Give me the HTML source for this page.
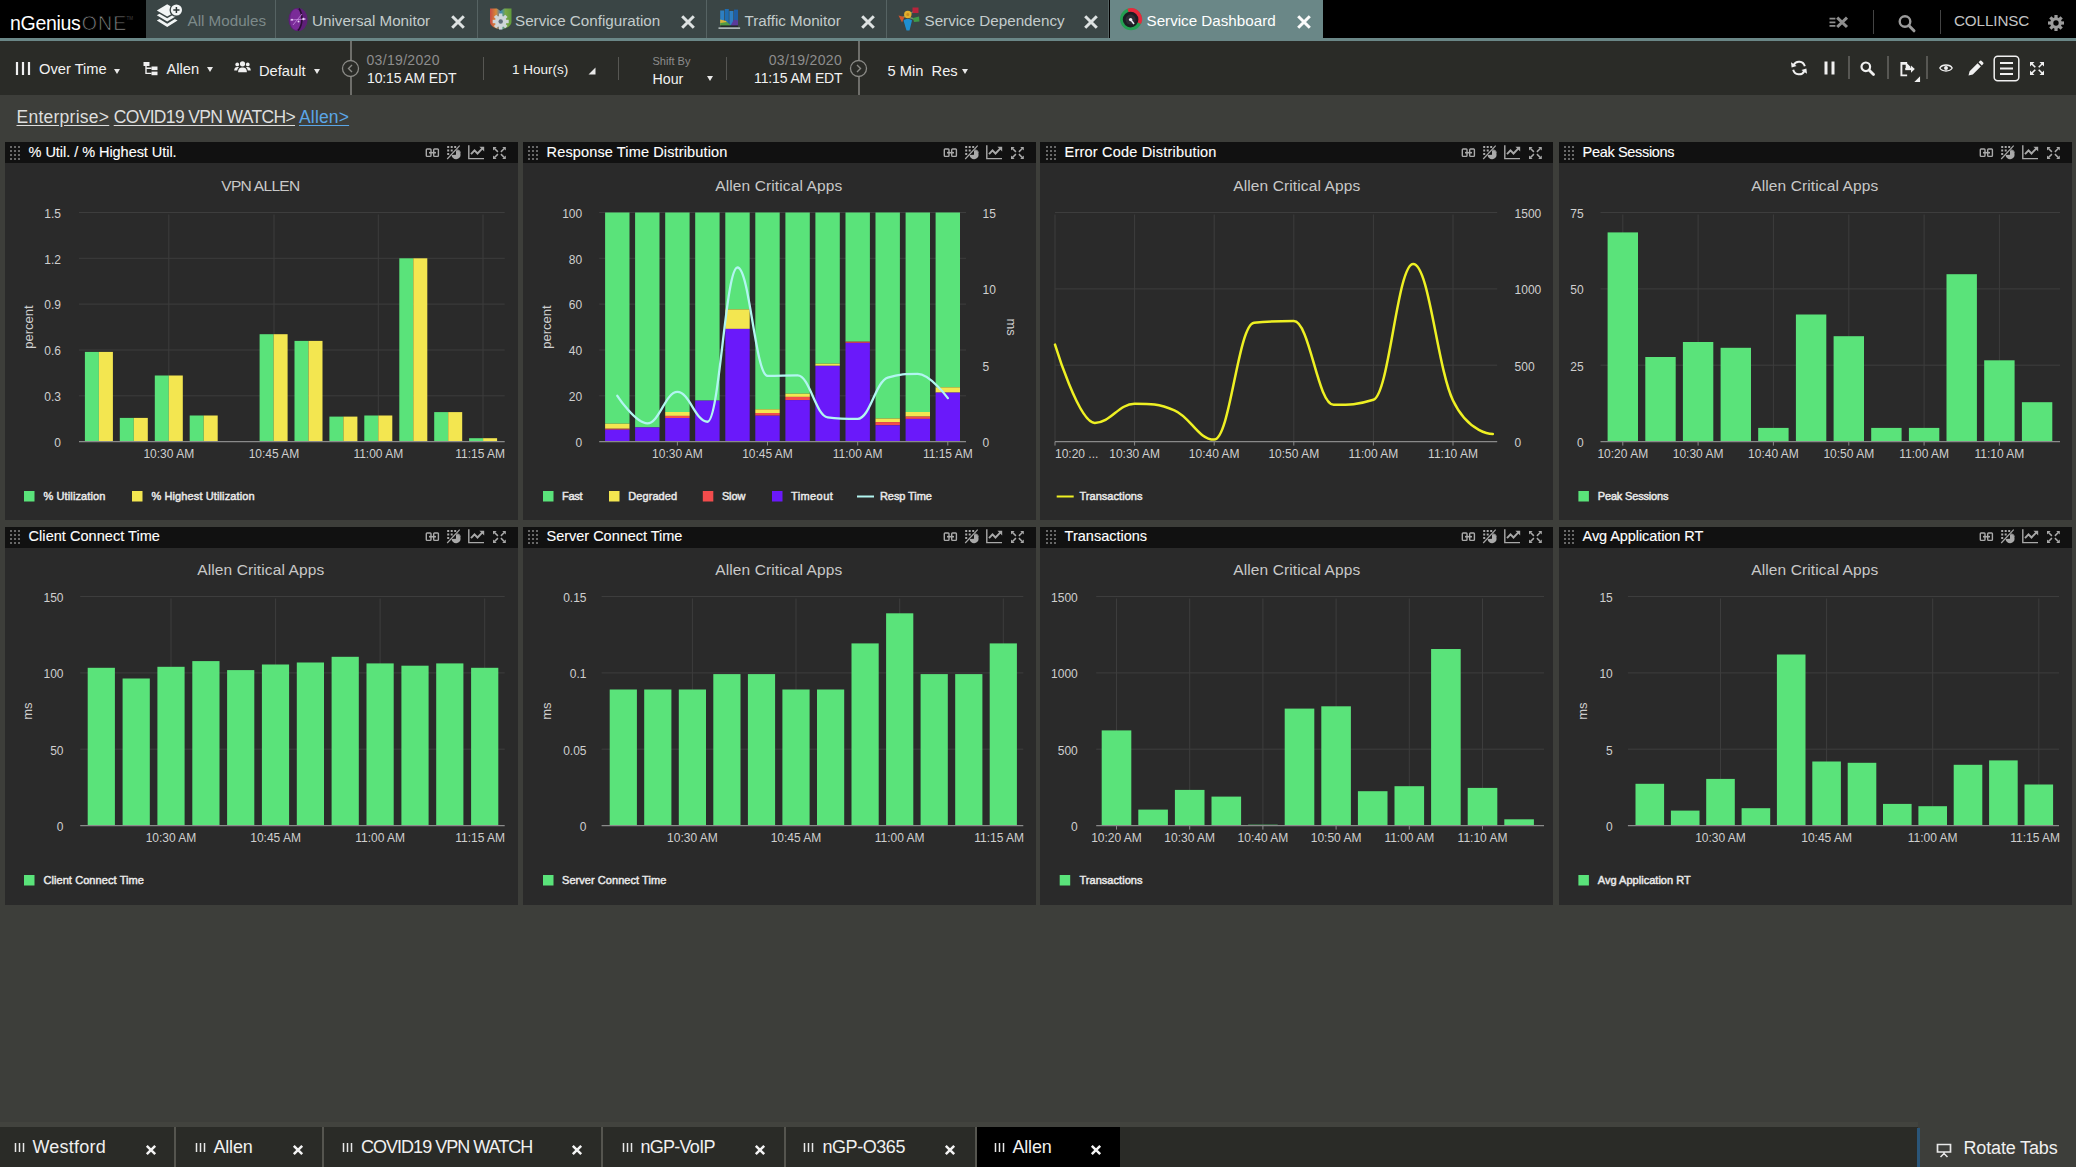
<!DOCTYPE html>
<html lang="en"><head><meta charset="utf-8"><title>nGeniusONE - Service Dashboard</title>
<style>
html,body{margin:0;padding:0}
body{width:2076px;height:1167px;overflow:hidden;position:relative;background:#3d3e3a;font-family:"Liberation Sans",sans-serif;color:#fff}
*{box-sizing:border-box}
#topbar{position:absolute;left:0;top:0;width:2076px;height:38px;background:#000}
#tabline{position:absolute;left:0;top:37.5px;width:2076px;height:3.5px;background:#6a8787}
#logo{position:absolute;left:0;top:0;width:146px;height:38px;background:#000;font-size:19.5px;line-height:47px;padding-left:10px;letter-spacing:-.3px;overflow:hidden;white-space:nowrap}
#logo .one{color:#8a8a8a;font-weight:normal;letter-spacing:1.2px;-webkit-text-stroke:.75px #000;margin-left:1.2px}
#logo sup{font-size:4.5px;color:#444;letter-spacing:0;margin-left:-1px;position:relative;top:-3px;vertical-align:super;line-height:0}
.tab{position:absolute;top:0;height:38px;background:#3a4545;border-right:1px solid #566363;font-size:15.2px;line-height:42px;color:#c3cccc;white-space:nowrap}
.tab .lbl{position:absolute;top:0}
.tab.mod .lbl{color:#7d8a8a}
.tab.act{background:#6a8787;color:#fff;border-right:none;height:41px}
.tab svg{position:absolute}
.tab .x{position:absolute;top:13.7px;width:16px;height:16px}
.tr{position:absolute;top:0;height:38px}
#user{position:absolute;left:1954px;top:0;line-height:41.5px;font-size:15.2px;color:#c4c4c4;letter-spacing:-.1px}
.vs{position:absolute;width:1.2px;background:#444}
#toolbar{position:absolute;left:0;top:41px;width:2076px;height:54px;background:#2a2b27}
#toolbar .t{position:absolute;white-space:nowrap;font-size:14.7px;color:#f2f2f2;line-height:18px}
#toolbar .g{color:#8d8d8d;font-size:14px;letter-spacing:.32px}
#toolbar .s{color:#8d8d8d;font-size:11px}
#toolbar svg{position:absolute}
#toolbar .vl{position:absolute;top:0;width:2px;height:54px;background:#6e6e6a}
#toolbar .sep{position:absolute;top:16px;width:1.4px;height:23px;background:#575753}
.car{position:absolute;width:0;height:0;border-left:3px solid transparent;border-right:3px solid transparent;border-top:5px solid #e8e8e8}
#crumbs{position:absolute;left:16px;top:105px;font-size:17.5px;line-height:24px;white-space:nowrap;color:#dedede}
#crumbs a{position:absolute;top:0;color:#dedede;text-decoration:underline;text-underline-offset:2px}
#crumbs a.cur{color:#5ba6e6}
.panel{position:absolute;width:512px;height:378.6px;background:#2a2a2a;overflow:hidden}
.pin{position:absolute;top:0;width:512px;height:379px}
.phc{position:absolute;left:0;top:0;width:512px;height:21.4px}
.ph{position:absolute;left:0;top:0;width:512px;height:21.2px;background:#111}
.phc .grip{position:absolute;left:4px;top:3px}
.phc .pt{position:absolute;left:23.6px;top:0;line-height:20.5px;font-size:14.5px;color:#fff;white-space:nowrap;-webkit-text-stroke:.12px #fff}
.phc .hi{position:absolute;left:419px;top:0}
.ch{position:absolute;left:0;top:0;font-family:"Liberation Sans",sans-serif}
#bbar{position:absolute;left:0;top:1126.6px;width:1917.5px;height:41px;background:#2a2b27;box-shadow:0 -5px 0 #42433e}
#bbar .bt{position:absolute;top:.4px;height:40px;font-size:18px;line-height:40px;color:#f0f0f0;white-space:nowrap}
#bbar .bs{position:absolute;top:.4px;width:2px;height:40px;background:#55554f}
#bbar .act{position:absolute;top:.4px;height:40px;background:#000}
#bbar svg{position:absolute}
#rot{position:absolute;left:1917.3px;top:1127.5px;width:2.8px;height:40px;background:#2a5578}
#rott{position:absolute;left:1963.5px;top:1128.4px;font-size:18px;letter-spacing:-.16px;line-height:40px;color:#f0f0f0;white-space:nowrap}

</style></head>
<body>
<div id="topbar"></div>
<div id="logo">nGenius<span class="one">ONE</span><sup>TM</sup></div>
<nav id="tabs">
<div class="tab mod" style="left:146px;width:130px"><svg style="left:0;top:0" width="42" height="38" viewBox="0 0 42 38"><g fill="#f2f5f5"><path d="M10.8 10.4 L21.2 4.3 L31.6 10.4 L21.2 16.5 Z"/><path d="M10.8 15.2 L13.5 13.7 L21.2 18.3 L28.9 13.7 L31.6 15.2 L21.2 21.5 Z"/><path d="M10.8 20.6 L13.5 19.1 L21.2 23.7 L28.9 19.1 L31.6 20.6 L21.2 26.9 Z"/></g><circle cx="30.4" cy="10" r="6.9" fill="#3a4545"/><circle cx="30.4" cy="10" r="5.6" fill="#f2f5f5"/><path d="M30.4 6.9 V13.1 M27.3 10 H33.5" stroke="#2c3535" stroke-width="1.5"/></svg><span class="lbl" style="left:41.5px">All Modules</span></div>
<div class="tab" style="left:276px;width:201.5px"><svg style="left:11px;top:7px" width="22" height="25" viewBox="0 0 22 25"><ellipse cx="11" cy="12.5" rx="9.6" ry="11.6" fill="#5e1f78"/><ellipse cx="9" cy="12.5" rx="6" ry="10.6" fill="#7a2b98"/><path d="M12 1.5 C16 7 16 18 11 23.5" stroke="#2a0d36" stroke-width="1.6" fill="none"/><path d="M3 13 L19 12 M6 18 L15 7" stroke="#c58ade" stroke-width=".8" fill="none"/><circle cx="5" cy="12.8" r="1" fill="#e8cff5"/><circle cx="16.5" cy="12" r="1.2" fill="#e8cff5"/><circle cx="11.5" cy="14.5" r="1" fill="#e8cff5"/></svg><span class="lbl" style="left:36px">Universal Monitor</span><svg class="x" style="left:173.5px" viewBox="0 0 16 16"><path d="M2.2 2.2 L13.8 13.8 M13.8 2.2 L2.2 13.8" stroke="#dde2e2" stroke-width="3"/></svg></div>
<div class="tab" style="left:477.5px;width:229.5px"><svg style="left:11px;top:7px" width="24" height="24" viewBox="0 0 24 24"><defs><linearGradient id="scg" x1="0" x2="1" y1="0" y2="0"><stop offset="0" stop-color="#c84a44"/><stop offset=".28" stop-color="#d88a3a"/><stop offset=".5" stop-color="#3b86b8"/><stop offset=".72" stop-color="#7aa848"/><stop offset="1" stop-color="#5f9a3c"/></linearGradient></defs><path d="M1 1.5 H8 L11.5 4 L15 1.5 H22.5 V15 C22.5 19 17 21.5 11.7 22.5 C6 21.5 1 19 1 15 Z" fill="url(#scg)"/><g transform="translate(11.7 14.5)"><g fill="#cfd6da"><rect x="-1.7" y="-8" width="3.4" height="16"/><rect x="-1.7" y="-8" width="3.4" height="16" transform="rotate(45)"/><rect x="-1.7" y="-8" width="3.4" height="16" transform="rotate(90)"/><rect x="-1.7" y="-8" width="3.4" height="16" transform="rotate(135)"/><circle r="5.7"/></g><circle r="2.2" fill="#5d6c78"/></g></svg><span class="lbl" style="left:37.5px">Service Configuration</span><svg class="x" style="left:202.4px" viewBox="0 0 16 16"><path d="M2.2 2.2 L13.8 13.8 M13.8 2.2 L2.2 13.8" stroke="#dde2e2" stroke-width="3"/></svg></div>
<div class="tab" style="left:707px;width:180px"><svg style="left:11px;top:7px" width="24" height="24" viewBox="0 0 24 24"><rect x="2.2" y="3.5" width="4" height="16" fill="#2d7fc2"/><rect x="6.8" y="2" width="4" height="17.5" fill="#1f6db2"/><rect x="11.4" y="4" width="4" height="15.5" fill="#2d7fc2"/><rect x="16" y="2.6" width="4" height="17" fill="#1f5fa4"/><path d="M2.2 12.5 L8 14 L12 19.5 H2.2 Z" fill="#d9b436"/><path d="M2.2 16 L9 15 L14 19.5 H2.2 Z" fill="#4f9a44"/><path d="M12 19.5 L16 12.5 L20 13.5 V19.5 Z" fill="#5a3a9a"/><rect x="2.2" y="18.4" width="17.8" height="1.6" fill="#23272a"/><rect x="0.5" y="20.4" width="21.6" height="1.5" fill="#b9c3c3"/></svg><span class="lbl" style="left:37.5px">Traffic Monitor</span><svg class="x" style="left:152.9px" viewBox="0 0 16 16"><path d="M2.2 2.2 L13.8 13.8 M13.8 2.2 L2.2 13.8" stroke="#dde2e2" stroke-width="3"/></svg></div>
<div class="tab" style="left:887px;width:222px"><svg style="left:9px;top:5px" width="28" height="28" viewBox="0 0 28 28"><path d="M12 10 L4.5 13.5 M12 10 L20 5 M12 12 L21 15" stroke="#6e8f6a" stroke-width="1.4"/><path d="M2.5 10.5 L8.5 12 L6 17.5 Z" fill="#d2552e"/><path d="M16.5 2.5 H22.5 V8 H16.5 Z" fill="#b8243c"/><path d="M17 13 L23 11.5 L23.5 16.5 L18 17 Z" fill="#3f9a48"/><path d="M7.5 15.5 C9 13.5 14.5 13.5 16 15.5 L13.5 25.5 H10.5 Z" fill="#1f8fd0"/><circle cx="11.8" cy="9.5" r="3.7" fill="#e0b02e"/><circle cx="11.8" cy="9.5" r="1.5" fill="#c98a1e"/></svg><span class="lbl" style="left:37.5px">Service Dependency</span><svg class="x" style="left:195.7px" viewBox="0 0 16 16"><path d="M2.2 2.2 L13.8 13.8 M13.8 2.2 L2.2 13.8" stroke="#dde2e2" stroke-width="3"/></svg></div>
<div class="tab act" style="left:1109.5px;width:213.5px"><svg style="left:9.5px;top:7px" width="25" height="25" viewBox="0 0 25 25"><circle cx="12" cy="12.2" r="11" fill="#24a052"/><path d="M12 12.2 L8.5 1.8 A11 11 0 0 1 22 17 Z" fill="#e8283c"/><circle cx="11.6" cy="12.6" r="7.8" fill="#1c1c22"/><circle cx="11.6" cy="12.6" r="5" fill="#2c2c34"/><path d="M11.6 12.6 L15 17" stroke="#e8e8ee" stroke-width="1.6"/><circle cx="11.6" cy="12.6" r="1.7" fill="#f2f2f6"/></svg><span class="lbl" style="left:37px">Service Dashboard</span><svg class="x" style="left:186.5px" viewBox="0 0 16 16"><path d="M2.2 2.2 L13.8 13.8 M13.8 2.2 L2.2 13.8" stroke="#fbfbfb" stroke-width="3"/></svg></div>
</nav>
<div id="tabline"></div>
<svg class="tr" style="left:1828px" width="22" height="38" viewBox="0 0 22 38"><g stroke="#8e8e8e" stroke-width="1.7"><path d="M1.5 18.7 H7.4 M1.5 22.3 H7.4 M1.5 25.9 H7.4"/><path d="M9.2 17.6 L19 27 M19 17.6 L9.2 27" stroke-width="3"/></g></svg>
<div class="vs" style="left:1873px;top:10px;height:24px"></div>
<svg class="tr" style="left:1896px;top:1.5px" width="22" height="38" viewBox="0 0 22 38"><circle cx="9" cy="19.5" r="5.3" fill="none" stroke="#9b9b9b" stroke-width="2.4"/><path d="M12.8 23.5 L18 28.8" stroke="#9b9b9b" stroke-width="3" stroke-linecap="round"/></svg>
<div class="vs" style="left:1940.3px;top:10px;height:24px"></div>
<div id="user">COLLINSC</div>
<svg class="tr" style="left:2045.7px;top:.5px" width="20" height="38" viewBox="0 0 20 38"><g transform="translate(10 22)"><g fill="#9b9b9b"><rect x="-1.6" y="-8" width="3.2" height="16"/><rect x="-1.6" y="-8" width="3.2" height="16" transform="rotate(45)"/><rect x="-1.6" y="-8" width="3.2" height="16" transform="rotate(90)"/><rect x="-1.6" y="-8" width="3.2" height="16" transform="rotate(135)"/><circle r="5.8"/></g><circle r="2.7" fill="#000"/></g></svg>

<div id="toolbar">
<svg style="left:15px;top:21px" width="16" height="14" viewBox="0 0 16 14"><path d="M2 0 V13 M8 0 V13 M14 0 V13" stroke="#f0f0f0" stroke-width="2.2"/></svg>
<span class="t" style="left:39px;top:18.5px">Over Time</span><i class="car" style="left:113.5px;top:27.5px"></i>
<svg style="left:143px;top:20px" width="15" height="15" viewBox="0 0 15 15"><g fill="#f0f0f0"><rect x="0.5" y="1" width="6" height="4"/><rect x="8.5" y="5.5" width="6" height="3.6"/><rect x="8.5" y="10.6" width="6" height="3.6"/></g><path d="M3 5 V12.4 H8.5 M3 7.3 H8.5" fill="none" stroke="#f0f0f0" stroke-width="1.4"/></svg>
<span class="t" style="left:166.5px;top:18.5px">Allen</span><i class="car" style="left:206.5px;top:25.5px"></i>
<svg style="left:233.5px;top:20.3px" width="17" height="11.6" viewBox="0 0 19 13"><g fill="#f0f0f0"><circle cx="9.5" cy="3.2" r="2.9"/><path d="M4.6 12.5 C4.6 8.6 6.5 7.2 9.5 7.2 C12.5 7.2 14.4 8.6 14.4 12.5 Z"/><circle cx="3.6" cy="3.8" r="2.1"/><circle cx="15.4" cy="3.8" r="2.1"/><path d="M0.2 10.6 C0.2 7.8 1.6 6.7 3.8 6.7 C4.6 6.7 5.2 6.9 5.6 7.2 C4.3 8 3.7 9.2 3.6 10.6 Z"/><path d="M18.8 10.6 C18.8 7.8 17.4 6.7 15.2 6.7 C14.4 6.7 13.8 6.9 13.4 7.2 C14.7 8 15.3 9.2 15.4 10.6 Z"/></g></svg>
<span class="t" style="left:259px;top:20.5px">Default</span><i class="car" style="left:313.5px;top:27.5px"></i>
<div class="vl" style="left:349.5px"></div>
<svg style="left:341px;top:18px" width="19" height="19" viewBox="0 0 19 19"><circle cx="9.5" cy="9.5" r="8" fill="#2a2b27" stroke="#8a8a86" stroke-width="1.3"/><path d="M11 6 L7.5 9.5 L11 13" fill="none" stroke="#8a8a86" stroke-width="1.4"/></svg>
<span class="t g" style="left:366.5px;top:10px">03/19/2020</span>
<span class="t" style="left:367px;top:28px;font-size:14px;letter-spacing:-.13px">10:15 AM EDT</span>
<div class="sep" style="left:483px"></div>
<span class="t" style="left:512px;top:20px;font-size:13.5px">1 Hour(s)</span>
<svg style="left:588px;top:26px" width="8" height="8" viewBox="0 0 8 8"><path d="M7.5 0.5 V7.5 H0.5 Z" fill="#e8e8e8"/></svg>
<div class="sep" style="left:618px"></div>
<span class="t s" style="left:652.5px;top:11px">Shift By</span>
<span class="t" style="left:652.5px;top:28.5px;font-size:14.2px">Hour</span><i class="car" style="left:706.5px;top:35px"></i>
<div class="sep" style="left:726px"></div>
<span class="t g" style="right:1234px;top:10px">03/19/2020</span>
<span class="t" style="right:1233.5px;top:28px;font-size:14px;letter-spacing:-.13px">11:15 AM EDT</span>
<div class="vl" style="left:857.5px"></div>
<svg style="left:849px;top:18px" width="19" height="19" viewBox="0 0 19 19"><circle cx="9.5" cy="9.5" r="8" fill="#2a2b27" stroke="#8a8a86" stroke-width="1.3"/><path d="M8 6 L11.5 9.5 L8 13" fill="none" stroke="#8a8a86" stroke-width="1.4"/></svg>
<span class="t" style="left:887.5px;top:20.5px">5 Min&nbsp; Res</span><i class="car" style="left:961.5px;top:27.5px"></i>

<svg style="left:1789px;top:17px" width="20" height="20" viewBox="0 0 20 20"><g fill="none" stroke="#f0f0f0" stroke-width="2"><path d="M15.8 8.2 A6 6 0 0 0 4.6 7"/><path d="M4.2 11.8 A6 6 0 0 0 15.4 13"/></g><path d="M2 4.2 L2.6 9.4 L7.6 8 Z M18 15.8 L17.4 10.6 L12.4 12 Z" fill="#f0f0f0"/></svg>
<svg style="left:1823px;top:20px" width="13" height="14" viewBox="0 0 13 14"><path d="M3 0.5 V13.5 M10 0.5 V13.5" stroke="#f0f0f0" stroke-width="3"/></svg>
<div class="sep" style="left:1848.3px;top:15px"></div>
<svg style="left:1859px;top:19px" width="17" height="17" viewBox="0 0 17 17"><circle cx="6.8" cy="6.8" r="4.3" fill="none" stroke="#f0f0f0" stroke-width="2.2"/><path d="M10 10 L14.5 14.5" stroke="#f0f0f0" stroke-width="2.8" stroke-linecap="round"/></svg>
<div class="sep" style="left:1887.3px;top:15px"></div>
<svg style="left:1899px;top:19px" width="23" height="23" viewBox="0 0 24 24"><path d="M8.5 3 H2.5 V16 H8.5" fill="none" stroke="#f0f0f0" stroke-width="2"/><path d="M3 3 H8 L12 7 V9 H7 V5 H3 Z" fill="#f0f0f0"/><path d="M6.5 9.5 H13" stroke="#f0f0f0" stroke-width="2.2"/><path d="M12.5 5.8 L16.5 9.5 L12.5 13.2 Z" fill="#f0f0f0"/><path d="M22 17 V23 H16 Z" fill="#f0f0f0"/></svg>
<div class="sep" style="left:1926.3px;top:15px"></div>
<svg style="left:1938.6px;top:22px" width="14" height="10" viewBox="0 0 17 12"><path d="M1 6 C4 1.2 13 1.2 16 6 C13 10.8 4 10.8 1 6 Z" fill="none" stroke="#f0f0f0" stroke-width="1.7"/><circle cx="8.5" cy="6" r="2.4" fill="#f0f0f0"/></svg>
<svg style="left:1967px;top:19px" width="17" height="17" viewBox="0 0 17 17"><path d="M1.5 15.5 L2.6 11.2 L10.6 3.2 L13.8 6.4 L5.8 14.4 Z M11.6 2.2 L13 0.8 A1 1 0 0 1 14.4 0.8 L16.2 2.6 A1 1 0 0 1 16.2 4 L14.8 5.4 Z" fill="#f0f0f0"/></svg>
<svg style="left:1993px;top:14px" width="27" height="27" viewBox="0 0 27 27"><rect x="1.2" y="1.2" width="24.6" height="24.6" rx="3.5" fill="none" stroke="#f0f0f0" stroke-width="1.5"/><path d="M7 8 H20 M7 13.5 H20 M7 19 H20" stroke="#f0f0f0" stroke-width="2.2"/></svg>
<svg style="left:2029px;top:20px" width="16" height="15" viewBox="0 0 16 15"><g fill="#f0f0f0"><path d="M1 1 H5.5 L1 5.5 Z M15 1 H10.5 L15 5.5 Z M1 14 H5.5 L1 9.5 Z M15 14 H10.5 L15 9.5 Z"/></g><path d="M2.5 2.5 L6.3 6.3 M13.5 2.5 L9.7 6.3 M2.5 12.5 L6.3 8.7 M13.5 12.5 L9.7 8.7" stroke="#f0f0f0" stroke-width="1.6"/></svg>
</div>

<div id="crumbs"><a style="left:0.5px;letter-spacing:.25px">Enterprise&gt;</a><a style="left:97.7px;letter-spacing:-.65px">COVID19 VPN WATCH&gt;</a><a class="cur" style="left:283px;letter-spacing:.16px">Allen&gt;</a></div>

<main id="grid">
<section class="panel" style="left:5px;top:142.3px;width:513.0px;height:378.2px"><div class="pin" style="left:0.0px;top:-0.3px">
<header class="ph" style="left:0.0px;top:0.3px;width:513.0px"></header>
<div class="phc"><svg class="grip" width="12" height="15" viewBox="0 0 12 15"><g fill="#686868"><rect x="1" y="1" width="2" height="2"/><rect x="1" y="5" width="2" height="2"/><rect x="1" y="9" width="2" height="2"/><rect x="1" y="13" width="2" height="2"/><rect x="5" y="1" width="2" height="2"/><rect x="5" y="5" width="2" height="2"/><rect x="5" y="9" width="2" height="2"/><rect x="5" y="13" width="2" height="2"/><rect x="9" y="1" width="2" height="2"/><rect x="9" y="5" width="2" height="2"/><rect x="9" y="9" width="2" height="2"/><rect x="9" y="13" width="2" height="2"/></g></svg><span class="pt" style="letter-spacing:-0.042px">% Util. / % Highest Util.</span><svg class="hi" width="92" height="21" viewBox="0 0 92 21">
<g fill="none" stroke="#a9a9a9" stroke-width="1.4">
<rect x="2.3" y="7" width="4.7" height="7.4" rx=".8"/><rect x="9.7" y="7" width="4.7" height="7.4" rx=".8"/>
<line x1="5" y1="10.7" x2="12" y2="10.7" stroke-width="1.6"/>
</g>
<g fill="#a9a9a9">
<rect x="23.2" y="4" width="2" height="2"/><rect x="26.7" y="4" width="2" height="2"/><rect x="30.2" y="4" width="2" height="2"/>
<rect x="23.2" y="7.5" width="2" height="2"/><rect x="26.7" y="7.5" width="2" height="2"/>
<rect x="23.2" y="11" width="2" height="2"/>
<path d="M32 8.3 A4.5 4.5 0 1 1 27.6 13 L32 12.8 Z"/>
<path d="M33.1 7.2 A4.5 4.5 0 0 1 36.9 11.3 L33.1 11.5 Z" opacity=".8"/>
</g>
<line x1="23.2" y1="17" x2="35.7" y2="3.6" stroke="#a9a9a9" stroke-width="1.2"/>
<g fill="none" stroke="#a9a9a9" stroke-width="1.4">
<path d="M44.8 3.2 V16.6 H60"/>
<path d="M47 12.2 L50.5 8.3 L53.5 11.5 L58.4 6.4" stroke-width="1.9"/>
</g>
<path d="M55.4 4.8 H60.2 V9.6 Z" fill="#a9a9a9"/>
<g fill="#a9a9a9" stroke="#a9a9a9" stroke-width="1.5">
<path d="M69 5 H72.6 L69 8.6 Z M81.8 5 H78.2 L81.8 8.6 Z M69 17 H72.6 L69 13.4 Z M81.8 17 H78.2 L81.8 13.4 Z" stroke="none"/>
<path d="M70.5 6.5 L73.9 9.9 M80.3 6.5 L76.9 9.9 M70.5 15.5 L73.9 12.1 M80.3 15.5 L76.9 12.1" fill="none"/>
</g>
</svg></div>
<svg class="ch" width="512" height="379" viewBox="0 0 512 379">
<text x="255.4" y="48.6" font-size="15.5" fill="#c8c8c8" text-anchor="middle" font-weight="normal" letter-spacing="-0.693">VPN ALLEN</text>
<line x1="74.0" x2="499.7" y1="253.8" y2="253.8" stroke="#3d3d3d" stroke-width="1"/>
<line x1="74.0" x2="499.7" y1="208.0" y2="208.0" stroke="#3d3d3d" stroke-width="1"/>
<line x1="74.0" x2="499.7" y1="162.1" y2="162.1" stroke="#3d3d3d" stroke-width="1"/>
<line x1="74.0" x2="499.7" y1="116.3" y2="116.3" stroke="#3d3d3d" stroke-width="1"/>
<line x1="74.0" x2="499.7" y1="70.5" y2="70.5" stroke="#3d3d3d" stroke-width="1"/>
<line x1="163.8" x2="163.8" y1="72.5" y2="299.6" stroke="#3d3d3d" stroke-width="1"/>
<line x1="269.0" x2="269.0" y1="72.5" y2="299.6" stroke="#3d3d3d" stroke-width="1"/>
<line x1="373.3" x2="373.3" y1="72.5" y2="299.6" stroke="#3d3d3d" stroke-width="1"/>
<line x1="478.0" x2="478.0" y1="72.5" y2="299.6" stroke="#3d3d3d" stroke-width="1"/>
<text x="56.0" y="304.9" font-size="12" fill="#cfcfcf" text-anchor="end" font-weight="normal">0</text>
<text x="56.0" y="259.1" font-size="12" fill="#cfcfcf" text-anchor="end" font-weight="normal">0.3</text>
<text x="56.0" y="213.3" font-size="12" fill="#cfcfcf" text-anchor="end" font-weight="normal">0.6</text>
<text x="56.0" y="167.4" font-size="12" fill="#cfcfcf" text-anchor="end" font-weight="normal">0.9</text>
<text x="56.0" y="121.6" font-size="12" fill="#cfcfcf" text-anchor="end" font-weight="normal">1.2</text>
<text x="56.0" y="75.8" font-size="12" fill="#cfcfcf" text-anchor="end" font-weight="normal">1.5</text>
<text transform="translate(28.1 185.1) rotate(-90)" font-size="13" fill="#cfcfcf" text-anchor="middle">percent</text>
<rect x="79.9" y="209.9" width="14.0" height="89.7" fill="#5ae37a"/>
<rect x="114.8" y="275.9" width="14.0" height="23.7" fill="#5ae37a"/>
<rect x="149.8" y="233.5" width="14.0" height="66.1" fill="#5ae37a"/>
<rect x="184.7" y="273.5" width="14.0" height="26.1" fill="#5ae37a"/>
<rect x="254.6" y="192.2" width="14.0" height="107.4" fill="#5ae37a"/>
<rect x="289.5" y="198.9" width="14.0" height="100.7" fill="#5ae37a"/>
<rect x="324.4" y="274.6" width="14.0" height="25.0" fill="#5ae37a"/>
<rect x="359.3" y="273.5" width="14.0" height="26.1" fill="#5ae37a"/>
<rect x="394.3" y="116.3" width="14.0" height="183.3" fill="#5ae37a"/>
<rect x="429.2" y="270.1" width="14.0" height="29.5" fill="#5ae37a"/>
<rect x="464.1" y="296.2" width="14.0" height="3.4" fill="#5ae37a"/>
<rect x="93.9" y="209.9" width="14.0" height="89.7" fill="#f3e650"/>
<rect x="128.8" y="275.9" width="14.0" height="23.7" fill="#f3e650"/>
<rect x="163.8" y="233.5" width="14.0" height="66.1" fill="#f3e650"/>
<rect x="198.7" y="273.5" width="14.0" height="26.1" fill="#f3e650"/>
<rect x="268.6" y="192.2" width="14.0" height="107.4" fill="#f3e650"/>
<rect x="303.5" y="198.9" width="14.0" height="100.7" fill="#f3e650"/>
<rect x="338.4" y="274.6" width="14.0" height="25.0" fill="#f3e650"/>
<rect x="373.3" y="273.5" width="14.0" height="26.1" fill="#f3e650"/>
<rect x="408.3" y="116.3" width="14.0" height="183.3" fill="#f3e650"/>
<rect x="443.2" y="270.1" width="14.0" height="29.5" fill="#f3e650"/>
<rect x="478.1" y="296.2" width="14.0" height="3.4" fill="#f3e650"/>
<line x1="74.0" x2="499.7" y1="299.6" y2="299.6" stroke="#8a8a8a" stroke-width="1.3"/>
<text x="163.8" y="315.6" font-size="12" fill="#cfcfcf" text-anchor="middle" font-weight="normal">10:30 AM</text>
<text x="269.0" y="315.6" font-size="12" fill="#cfcfcf" text-anchor="middle" font-weight="normal">10:45 AM</text>
<text x="373.3" y="315.6" font-size="12" fill="#cfcfcf" text-anchor="middle" font-weight="normal">11:00 AM</text>
<text x="500.0" y="315.6" font-size="12" fill="#cfcfcf" text-anchor="end" font-weight="normal">11:15 AM</text>
<rect x="19.0" y="349" width="10.5" height="10.5" fill="#5ae37a"/>
<text x="38.4" y="358.2" font-size="11" fill="#e9e9e9" text-anchor="start" font-weight="normal" letter-spacing="0.129" stroke="#e9e9e9" stroke-width=".45">% Utilization</text>
<rect x="127.0" y="349" width="10.5" height="10.5" fill="#f3e650"/>
<text x="146.4" y="358.2" font-size="11" fill="#e9e9e9" text-anchor="start" font-weight="normal" letter-spacing="0.116" stroke="#e9e9e9" stroke-width=".45">% Highest Utilization</text>
</svg></div></section>
<section class="panel" style="left:523px;top:142.3px;width:513.0px;height:378.2px"><div class="pin" style="left:0.0px;top:-0.3px">
<header class="ph" style="left:0.0px;top:0.3px;width:513.0px"></header>
<div class="phc"><svg class="grip" width="12" height="15" viewBox="0 0 12 15"><g fill="#686868"><rect x="1" y="1" width="2" height="2"/><rect x="1" y="5" width="2" height="2"/><rect x="1" y="9" width="2" height="2"/><rect x="1" y="13" width="2" height="2"/><rect x="5" y="1" width="2" height="2"/><rect x="5" y="5" width="2" height="2"/><rect x="5" y="9" width="2" height="2"/><rect x="5" y="13" width="2" height="2"/><rect x="9" y="1" width="2" height="2"/><rect x="9" y="5" width="2" height="2"/><rect x="9" y="9" width="2" height="2"/><rect x="9" y="13" width="2" height="2"/></g></svg><span class="pt" style="letter-spacing:0.135px">Response Time Distribution</span><svg class="hi" width="92" height="21" viewBox="0 0 92 21">
<g fill="none" stroke="#a9a9a9" stroke-width="1.4">
<rect x="2.3" y="7" width="4.7" height="7.4" rx=".8"/><rect x="9.7" y="7" width="4.7" height="7.4" rx=".8"/>
<line x1="5" y1="10.7" x2="12" y2="10.7" stroke-width="1.6"/>
</g>
<g fill="#a9a9a9">
<rect x="23.2" y="4" width="2" height="2"/><rect x="26.7" y="4" width="2" height="2"/><rect x="30.2" y="4" width="2" height="2"/>
<rect x="23.2" y="7.5" width="2" height="2"/><rect x="26.7" y="7.5" width="2" height="2"/>
<rect x="23.2" y="11" width="2" height="2"/>
<path d="M32 8.3 A4.5 4.5 0 1 1 27.6 13 L32 12.8 Z"/>
<path d="M33.1 7.2 A4.5 4.5 0 0 1 36.9 11.3 L33.1 11.5 Z" opacity=".8"/>
</g>
<line x1="23.2" y1="17" x2="35.7" y2="3.6" stroke="#a9a9a9" stroke-width="1.2"/>
<g fill="none" stroke="#a9a9a9" stroke-width="1.4">
<path d="M44.8 3.2 V16.6 H60"/>
<path d="M47 12.2 L50.5 8.3 L53.5 11.5 L58.4 6.4" stroke-width="1.9"/>
</g>
<path d="M55.4 4.8 H60.2 V9.6 Z" fill="#a9a9a9"/>
<g fill="#a9a9a9" stroke="#a9a9a9" stroke-width="1.5">
<path d="M69 5 H72.6 L69 8.6 Z M81.8 5 H78.2 L81.8 8.6 Z M69 17 H72.6 L69 13.4 Z M81.8 17 H78.2 L81.8 13.4 Z" stroke="none"/>
<path d="M70.5 6.5 L73.9 9.9 M80.3 6.5 L76.9 9.9 M70.5 15.5 L73.9 12.1 M80.3 15.5 L76.9 12.1" fill="none"/>
</g>
</svg></div>
<svg class="ch" width="512" height="379" viewBox="0 0 512 379">
<text x="255.8" y="48.6" font-size="15.5" fill="#c8c8c8" text-anchor="middle" font-weight="normal" letter-spacing="0.110">Allen Critical Apps</text>
<line x1="76.2" x2="443.0" y1="253.8" y2="253.8" stroke="#3d3d3d" stroke-width="1"/>
<line x1="76.2" x2="443.0" y1="208.0" y2="208.0" stroke="#3d3d3d" stroke-width="1"/>
<line x1="76.2" x2="443.0" y1="162.1" y2="162.1" stroke="#3d3d3d" stroke-width="1"/>
<line x1="76.2" x2="443.0" y1="116.3" y2="116.3" stroke="#3d3d3d" stroke-width="1"/>
<line x1="76.2" x2="443.0" y1="70.5" y2="70.5" stroke="#3d3d3d" stroke-width="1"/>
<text x="59.2" y="304.9" font-size="12" fill="#cfcfcf" text-anchor="end" font-weight="normal">0</text>
<text x="59.2" y="259.1" font-size="12" fill="#cfcfcf" text-anchor="end" font-weight="normal">20</text>
<text x="59.2" y="213.3" font-size="12" fill="#cfcfcf" text-anchor="end" font-weight="normal">40</text>
<text x="59.2" y="167.4" font-size="12" fill="#cfcfcf" text-anchor="end" font-weight="normal">60</text>
<text x="59.2" y="121.6" font-size="12" fill="#cfcfcf" text-anchor="end" font-weight="normal">80</text>
<text x="59.2" y="75.8" font-size="12" fill="#cfcfcf" text-anchor="end" font-weight="normal">100</text>
<text x="459.6" y="304.9" font-size="12" fill="#cfcfcf" text-anchor="start" font-weight="normal">0</text>
<text x="459.6" y="228.5" font-size="12" fill="#cfcfcf" text-anchor="start" font-weight="normal">5</text>
<text x="459.6" y="152.2" font-size="12" fill="#cfcfcf" text-anchor="start" font-weight="normal">10</text>
<text x="459.6" y="75.8" font-size="12" fill="#cfcfcf" text-anchor="start" font-weight="normal">15</text>
<text transform="translate(28.1 185.1) rotate(-90)" font-size="13" fill="#cfcfcf" text-anchor="middle">percent</text>
<text transform="translate(483.5 185.1) rotate(90)" font-size="13" fill="#cfcfcf" text-anchor="middle">ms</text>
<rect x="82.1" y="70.5" width="24.4" height="211.2" fill="#5ae37a"/>
<rect x="82.1" y="281.7" width="24.4" height="5.0" fill="#f3e650"/>
<rect x="82.1" y="286.8" width="24.4" height="0.9" fill="#f24c4c"/>
<rect x="82.1" y="287.7" width="24.4" height="11.9" fill="#6a19fa"/>
<rect x="112.1" y="70.5" width="24.4" height="214.9" fill="#5ae37a"/>
<rect x="112.1" y="285.4" width="24.4" height="14.2" fill="#6a19fa"/>
<rect x="142.2" y="70.5" width="24.4" height="199.5" fill="#5ae37a"/>
<rect x="142.2" y="270.0" width="24.4" height="3.9" fill="#f3e650"/>
<rect x="142.2" y="273.9" width="24.4" height="2.1" fill="#f24c4c"/>
<rect x="142.2" y="276.0" width="24.4" height="23.6" fill="#6a19fa"/>
<rect x="172.2" y="70.5" width="24.4" height="188.1" fill="#5ae37a"/>
<rect x="172.2" y="258.6" width="24.4" height="41.0" fill="#6a19fa"/>
<rect x="202.3" y="70.5" width="24.4" height="96.9" fill="#5ae37a"/>
<rect x="202.3" y="167.4" width="24.4" height="19.5" fill="#f3e650"/>
<rect x="202.3" y="186.9" width="24.4" height="112.7" fill="#6a19fa"/>
<rect x="232.3" y="70.5" width="24.4" height="196.8" fill="#5ae37a"/>
<rect x="232.3" y="267.3" width="24.4" height="3.7" fill="#f3e650"/>
<rect x="232.3" y="271.0" width="24.4" height="2.7" fill="#f24c4c"/>
<rect x="232.3" y="273.7" width="24.4" height="25.9" fill="#6a19fa"/>
<rect x="262.4" y="70.5" width="24.4" height="181.2" fill="#5ae37a"/>
<rect x="262.4" y="251.7" width="24.4" height="3.2" fill="#f3e650"/>
<rect x="262.4" y="254.9" width="24.4" height="3.2" fill="#f24c4c"/>
<rect x="262.4" y="258.1" width="24.4" height="41.5" fill="#6a19fa"/>
<rect x="292.4" y="70.5" width="24.4" height="151.2" fill="#5ae37a"/>
<rect x="292.4" y="221.7" width="24.4" height="2.1" fill="#f3e650"/>
<rect x="292.4" y="223.8" width="24.4" height="75.8" fill="#6a19fa"/>
<rect x="322.5" y="70.5" width="24.4" height="129.2" fill="#5ae37a"/>
<rect x="322.5" y="199.7" width="24.4" height="1.1" fill="#f24c4c"/>
<rect x="322.5" y="200.9" width="24.4" height="98.7" fill="#6a19fa"/>
<rect x="352.5" y="70.5" width="24.4" height="206.0" fill="#5ae37a"/>
<rect x="352.5" y="276.5" width="24.4" height="3.7" fill="#f3e650"/>
<rect x="352.5" y="280.1" width="24.4" height="3.2" fill="#f24c4c"/>
<rect x="352.5" y="283.3" width="24.4" height="16.3" fill="#6a19fa"/>
<rect x="382.6" y="70.5" width="24.4" height="199.5" fill="#5ae37a"/>
<rect x="382.6" y="270.0" width="24.4" height="4.6" fill="#f3e650"/>
<rect x="382.6" y="274.6" width="24.4" height="2.3" fill="#f24c4c"/>
<rect x="382.6" y="276.9" width="24.4" height="22.7" fill="#6a19fa"/>
<rect x="412.6" y="70.5" width="24.4" height="174.8" fill="#5ae37a"/>
<rect x="412.6" y="245.3" width="24.4" height="5.3" fill="#f3e650"/>
<rect x="412.6" y="250.6" width="24.4" height="49.0" fill="#6a19fa"/>
<path d="M 94.30 253.78 C 94.30 253.78 112.33 281.42 124.35 281.42 C 136.37 281.42 142.38 249.96 154.40 249.96 C 166.42 249.96 172.43 279.74 184.45 279.74 C 196.47 279.74 202.48 125.48 214.50 125.48 C 226.52 125.48 232.53 233.92 244.55 233.92 C 256.57 233.92 262.58 233.47 274.60 233.47 C 286.62 233.47 292.63 273.79 304.65 275.32 C 316.67 276.84 322.68 276.84 334.70 276.84 C 346.72 276.84 352.73 239.27 364.75 235.60 C 376.77 231.94 382.78 231.94 394.80 231.94 C 406.82 231.94 424.85 256.07 424.85 256.07" fill="none" stroke="#b2f5f0" stroke-width="2.3" stroke-linecap="round"/>
<line x1="76.2" x2="443.0" y1="299.6" y2="299.6" stroke="#8a8a8a" stroke-width="1.3"/>
<line x1="154.4" x2="154.4" y1="299.6" y2="303.6" stroke="#8a8a8a" stroke-width="1"/>
<line x1="244.5" x2="244.5" y1="299.6" y2="303.6" stroke="#8a8a8a" stroke-width="1"/>
<line x1="334.7" x2="334.7" y1="299.6" y2="303.6" stroke="#8a8a8a" stroke-width="1"/>
<line x1="424.8" x2="424.8" y1="299.6" y2="303.6" stroke="#8a8a8a" stroke-width="1"/>
<text x="154.4" y="315.6" font-size="12" fill="#cfcfcf" text-anchor="middle" font-weight="normal">10:30 AM</text>
<text x="244.5" y="315.6" font-size="12" fill="#cfcfcf" text-anchor="middle" font-weight="normal">10:45 AM</text>
<text x="334.7" y="315.6" font-size="12" fill="#cfcfcf" text-anchor="middle" font-weight="normal">11:00 AM</text>
<text x="424.8" y="315.6" font-size="12" fill="#cfcfcf" text-anchor="middle" font-weight="normal">11:15 AM</text>
<rect x="20.0" y="349" width="10.5" height="10.5" fill="#5ae37a"/>
<text x="39.0" y="358.2" font-size="11" fill="#e9e9e9" text-anchor="start" font-weight="normal" letter-spacing="-0.248" stroke="#e9e9e9" stroke-width=".45">Fast</text>
<rect x="86.0" y="349" width="10.5" height="10.5" fill="#f3e650"/>
<text x="105.3" y="358.2" font-size="11" fill="#e9e9e9" text-anchor="start" font-weight="normal" letter-spacing="0.061" stroke="#e9e9e9" stroke-width=".45">Degraded</text>
<rect x="179.8" y="349" width="10.5" height="10.5" fill="#f24c4c"/>
<text x="198.9" y="358.2" font-size="11" fill="#e9e9e9" text-anchor="start" font-weight="normal" letter-spacing="-0.111" stroke="#e9e9e9" stroke-width=".45">Slow</text>
<rect x="249.0" y="349" width="10.5" height="10.5" fill="#6a19fa"/>
<text x="268.0" y="358.2" font-size="11" fill="#e9e9e9" text-anchor="start" font-weight="normal" letter-spacing="0.396" stroke="#e9e9e9" stroke-width=".45">Timeout</text>
<line x1="334.0" x2="351.0" y1="354.5" y2="354.5" stroke="#b2f5f0" stroke-width="2"/>
<text x="357.0" y="358.2" font-size="11" fill="#e9e9e9" text-anchor="start" font-weight="normal" letter-spacing="-0.086" stroke="#e9e9e9" stroke-width=".45">Resp Time</text>
</svg></div></section>
<section class="panel" style="left:1040px;top:142.3px;width:513.0px;height:378.2px"><div class="pin" style="left:1.0px;top:-0.3px">
<header class="ph" style="left:-1.0px;top:0.3px;width:513.0px"></header>
<div class="phc"><svg class="grip" width="12" height="15" viewBox="0 0 12 15"><g fill="#686868"><rect x="1" y="1" width="2" height="2"/><rect x="1" y="5" width="2" height="2"/><rect x="1" y="9" width="2" height="2"/><rect x="1" y="13" width="2" height="2"/><rect x="5" y="1" width="2" height="2"/><rect x="5" y="5" width="2" height="2"/><rect x="5" y="9" width="2" height="2"/><rect x="5" y="13" width="2" height="2"/><rect x="9" y="1" width="2" height="2"/><rect x="9" y="5" width="2" height="2"/><rect x="9" y="9" width="2" height="2"/><rect x="9" y="13" width="2" height="2"/></g></svg><span class="pt" style="letter-spacing:0.197px">Error Code Distribution</span><svg class="hi" width="92" height="21" viewBox="0 0 92 21">
<g fill="none" stroke="#a9a9a9" stroke-width="1.4">
<rect x="2.3" y="7" width="4.7" height="7.4" rx=".8"/><rect x="9.7" y="7" width="4.7" height="7.4" rx=".8"/>
<line x1="5" y1="10.7" x2="12" y2="10.7" stroke-width="1.6"/>
</g>
<g fill="#a9a9a9">
<rect x="23.2" y="4" width="2" height="2"/><rect x="26.7" y="4" width="2" height="2"/><rect x="30.2" y="4" width="2" height="2"/>
<rect x="23.2" y="7.5" width="2" height="2"/><rect x="26.7" y="7.5" width="2" height="2"/>
<rect x="23.2" y="11" width="2" height="2"/>
<path d="M32 8.3 A4.5 4.5 0 1 1 27.6 13 L32 12.8 Z"/>
<path d="M33.1 7.2 A4.5 4.5 0 0 1 36.9 11.3 L33.1 11.5 Z" opacity=".8"/>
</g>
<line x1="23.2" y1="17" x2="35.7" y2="3.6" stroke="#a9a9a9" stroke-width="1.2"/>
<g fill="none" stroke="#a9a9a9" stroke-width="1.4">
<path d="M44.8 3.2 V16.6 H60"/>
<path d="M47 12.2 L50.5 8.3 L53.5 11.5 L58.4 6.4" stroke-width="1.9"/>
</g>
<path d="M55.4 4.8 H60.2 V9.6 Z" fill="#a9a9a9"/>
<g fill="#a9a9a9" stroke="#a9a9a9" stroke-width="1.5">
<path d="M69 5 H72.6 L69 8.6 Z M81.8 5 H78.2 L81.8 8.6 Z M69 17 H72.6 L69 13.4 Z M81.8 17 H78.2 L81.8 13.4 Z" stroke="none"/>
<path d="M70.5 6.5 L73.9 9.9 M80.3 6.5 L76.9 9.9 M70.5 15.5 L73.9 12.1 M80.3 15.5 L76.9 12.1" fill="none"/>
</g>
</svg></div>
<svg class="ch" width="512" height="379" viewBox="0 0 512 379">
<text x="255.8" y="48.6" font-size="15.5" fill="#c8c8c8" text-anchor="middle" font-weight="normal" letter-spacing="0.110">Allen Critical Apps</text>
<line x1="14.0" x2="456.2" y1="223.2" y2="223.2" stroke="#3d3d3d" stroke-width="1"/>
<line x1="14.0" x2="456.2" y1="146.9" y2="146.9" stroke="#3d3d3d" stroke-width="1"/>
<line x1="14.0" x2="456.2" y1="70.5" y2="70.5" stroke="#3d3d3d" stroke-width="1"/>
<line x1="14.0" x2="14.0" y1="72.5" y2="299.6" stroke="#3d3d3d" stroke-width="1"/>
<line x1="93.6" x2="93.6" y1="72.5" y2="299.6" stroke="#3d3d3d" stroke-width="1"/>
<line x1="173.2" x2="173.2" y1="72.5" y2="299.6" stroke="#3d3d3d" stroke-width="1"/>
<line x1="252.8" x2="252.8" y1="72.5" y2="299.6" stroke="#3d3d3d" stroke-width="1"/>
<line x1="332.4" x2="332.4" y1="72.5" y2="299.6" stroke="#3d3d3d" stroke-width="1"/>
<line x1="412.0" x2="412.0" y1="72.5" y2="299.6" stroke="#3d3d3d" stroke-width="1"/>
<text x="473.6" y="304.9" font-size="12" fill="#cfcfcf" text-anchor="start" font-weight="normal">0</text>
<text x="473.6" y="228.5" font-size="12" fill="#cfcfcf" text-anchor="start" font-weight="normal">500</text>
<text x="473.6" y="152.2" font-size="12" fill="#cfcfcf" text-anchor="start" font-weight="normal">1000</text>
<text x="473.6" y="75.8" font-size="12" fill="#cfcfcf" text-anchor="start" font-weight="normal">1500</text>
<path d="M 14.00 202.61 C 14.00 202.61 37.88 280.97 53.80 280.97 C 69.72 280.97 77.68 261.72 93.60 261.72 C 109.52 261.72 117.48 261.72 133.40 268.29 C 149.32 274.86 157.28 297.61 173.20 297.61 C 189.12 297.61 197.08 182.45 213.00 180.77 C 228.92 179.09 236.88 179.09 252.80 179.09 C 268.72 179.09 276.68 262.79 292.60 262.79 C 308.52 262.79 316.48 262.79 332.40 257.75 C 348.32 252.71 356.28 121.97 372.20 121.97 C 388.12 121.97 396.08 225.07 412.00 258.51 C 427.92 291.96 451.80 291.96 451.80 291.96" fill="none" stroke="#eef023" stroke-width="2.5" stroke-linecap="round"/>
<line x1="14.0" x2="456.2" y1="299.6" y2="299.6" stroke="#8a8a8a" stroke-width="1.3"/>
<line x1="14.0" x2="14.0" y1="299.6" y2="303.6" stroke="#8a8a8a" stroke-width="1"/>
<line x1="93.6" x2="93.6" y1="299.6" y2="303.6" stroke="#8a8a8a" stroke-width="1"/>
<line x1="173.2" x2="173.2" y1="299.6" y2="303.6" stroke="#8a8a8a" stroke-width="1"/>
<line x1="252.8" x2="252.8" y1="299.6" y2="303.6" stroke="#8a8a8a" stroke-width="1"/>
<line x1="332.4" x2="332.4" y1="299.6" y2="303.6" stroke="#8a8a8a" stroke-width="1"/>
<line x1="412.0" x2="412.0" y1="299.6" y2="303.6" stroke="#8a8a8a" stroke-width="1"/>
<text x="14.0" y="315.6" font-size="12" fill="#cfcfcf" text-anchor="start" font-weight="normal">10:20 ...</text>
<text x="93.6" y="315.6" font-size="12" fill="#cfcfcf" text-anchor="middle" font-weight="normal">10:30 AM</text>
<text x="173.2" y="315.6" font-size="12" fill="#cfcfcf" text-anchor="middle" font-weight="normal">10:40 AM</text>
<text x="252.8" y="315.6" font-size="12" fill="#cfcfcf" text-anchor="middle" font-weight="normal">10:50 AM</text>
<text x="332.4" y="315.6" font-size="12" fill="#cfcfcf" text-anchor="middle" font-weight="normal">11:00 AM</text>
<text x="412.0" y="315.6" font-size="12" fill="#cfcfcf" text-anchor="middle" font-weight="normal">11:10 AM</text>
<line x1="15.7" x2="32.7" y1="354.5" y2="354.5" stroke="#eef023" stroke-width="2"/>
<text x="38.4" y="358.2" font-size="11" fill="#e9e9e9" text-anchor="start" font-weight="normal" letter-spacing="0.053" stroke="#e9e9e9" stroke-width=".45">Transactions</text>
</svg></div></section>
<section class="panel" style="left:1558.7px;top:142.3px;width:513.3px;height:378.2px"><div class="pin" style="left:0.3px;top:-0.3px">
<header class="ph" style="left:-0.3px;top:0.3px;width:513.3px"></header>
<div class="phc"><svg class="grip" width="12" height="15" viewBox="0 0 12 15"><g fill="#686868"><rect x="1" y="1" width="2" height="2"/><rect x="1" y="5" width="2" height="2"/><rect x="1" y="9" width="2" height="2"/><rect x="1" y="13" width="2" height="2"/><rect x="5" y="1" width="2" height="2"/><rect x="5" y="5" width="2" height="2"/><rect x="5" y="9" width="2" height="2"/><rect x="5" y="13" width="2" height="2"/><rect x="9" y="1" width="2" height="2"/><rect x="9" y="5" width="2" height="2"/><rect x="9" y="9" width="2" height="2"/><rect x="9" y="13" width="2" height="2"/></g></svg><span class="pt" style="letter-spacing:-0.332px">Peak Sessions</span><svg class="hi" width="92" height="21" viewBox="0 0 92 21">
<g fill="none" stroke="#a9a9a9" stroke-width="1.4">
<rect x="2.3" y="7" width="4.7" height="7.4" rx=".8"/><rect x="9.7" y="7" width="4.7" height="7.4" rx=".8"/>
<line x1="5" y1="10.7" x2="12" y2="10.7" stroke-width="1.6"/>
</g>
<g fill="#a9a9a9">
<rect x="23.2" y="4" width="2" height="2"/><rect x="26.7" y="4" width="2" height="2"/><rect x="30.2" y="4" width="2" height="2"/>
<rect x="23.2" y="7.5" width="2" height="2"/><rect x="26.7" y="7.5" width="2" height="2"/>
<rect x="23.2" y="11" width="2" height="2"/>
<path d="M32 8.3 A4.5 4.5 0 1 1 27.6 13 L32 12.8 Z"/>
<path d="M33.1 7.2 A4.5 4.5 0 0 1 36.9 11.3 L33.1 11.5 Z" opacity=".8"/>
</g>
<line x1="23.2" y1="17" x2="35.7" y2="3.6" stroke="#a9a9a9" stroke-width="1.2"/>
<g fill="none" stroke="#a9a9a9" stroke-width="1.4">
<path d="M44.8 3.2 V16.6 H60"/>
<path d="M47 12.2 L50.5 8.3 L53.5 11.5 L58.4 6.4" stroke-width="1.9"/>
</g>
<path d="M55.4 4.8 H60.2 V9.6 Z" fill="#a9a9a9"/>
<g fill="#a9a9a9" stroke="#a9a9a9" stroke-width="1.5">
<path d="M69 5 H72.6 L69 8.6 Z M81.8 5 H78.2 L81.8 8.6 Z M69 17 H72.6 L69 13.4 Z M81.8 17 H78.2 L81.8 13.4 Z" stroke="none"/>
<path d="M70.5 6.5 L73.9 9.9 M80.3 6.5 L76.9 9.9 M70.5 15.5 L73.9 12.1 M80.3 15.5 L76.9 12.1" fill="none"/>
</g>
</svg></div>
<svg class="ch" width="512" height="379" viewBox="0 0 512 379">
<text x="255.8" y="48.6" font-size="15.5" fill="#c8c8c8" text-anchor="middle" font-weight="normal" letter-spacing="0.110">Allen Critical Apps</text>
<line x1="41.5" x2="501.0" y1="223.2" y2="223.2" stroke="#3d3d3d" stroke-width="1"/>
<line x1="41.5" x2="501.0" y1="146.9" y2="146.9" stroke="#3d3d3d" stroke-width="1"/>
<line x1="41.5" x2="501.0" y1="70.5" y2="70.5" stroke="#3d3d3d" stroke-width="1"/>
<line x1="63.8" x2="63.8" y1="72.5" y2="299.6" stroke="#3d3d3d" stroke-width="1"/>
<line x1="139.1" x2="139.1" y1="72.5" y2="299.6" stroke="#3d3d3d" stroke-width="1"/>
<line x1="214.4" x2="214.4" y1="72.5" y2="299.6" stroke="#3d3d3d" stroke-width="1"/>
<line x1="289.8" x2="289.8" y1="72.5" y2="299.6" stroke="#3d3d3d" stroke-width="1"/>
<line x1="365.1" x2="365.1" y1="72.5" y2="299.6" stroke="#3d3d3d" stroke-width="1"/>
<line x1="440.4" x2="440.4" y1="72.5" y2="299.6" stroke="#3d3d3d" stroke-width="1"/>
<text x="24.7" y="304.9" font-size="12" fill="#cfcfcf" text-anchor="end" font-weight="normal">0</text>
<text x="24.7" y="228.5" font-size="12" fill="#cfcfcf" text-anchor="end" font-weight="normal">25</text>
<text x="24.7" y="152.2" font-size="12" fill="#cfcfcf" text-anchor="end" font-weight="normal">50</text>
<text x="24.7" y="75.8" font-size="12" fill="#cfcfcf" text-anchor="end" font-weight="normal">75</text>
<rect x="48.6" y="90.4" width="30.4" height="209.2" fill="#5ae37a"/>
<rect x="86.3" y="215.0" width="30.4" height="84.6" fill="#5ae37a"/>
<rect x="123.9" y="200.0" width="30.4" height="99.6" fill="#5ae37a"/>
<rect x="161.6" y="205.8" width="30.4" height="93.8" fill="#5ae37a"/>
<rect x="199.2" y="285.9" width="30.4" height="13.7" fill="#5ae37a"/>
<rect x="236.9" y="172.5" width="30.4" height="127.1" fill="#5ae37a"/>
<rect x="274.6" y="194.2" width="30.4" height="105.4" fill="#5ae37a"/>
<rect x="312.2" y="285.9" width="30.4" height="13.7" fill="#5ae37a"/>
<rect x="349.9" y="285.9" width="30.4" height="13.7" fill="#5ae37a"/>
<rect x="387.5" y="132.2" width="30.4" height="167.4" fill="#5ae37a"/>
<rect x="425.2" y="218.3" width="30.4" height="81.3" fill="#5ae37a"/>
<rect x="462.9" y="260.2" width="30.4" height="39.4" fill="#5ae37a"/>
<line x1="41.5" x2="501.0" y1="299.6" y2="299.6" stroke="#8a8a8a" stroke-width="1.3"/>
<line x1="63.8" x2="63.8" y1="299.6" y2="303.6" stroke="#8a8a8a" stroke-width="1"/>
<line x1="139.1" x2="139.1" y1="299.6" y2="303.6" stroke="#8a8a8a" stroke-width="1"/>
<line x1="214.4" x2="214.4" y1="299.6" y2="303.6" stroke="#8a8a8a" stroke-width="1"/>
<line x1="289.8" x2="289.8" y1="299.6" y2="303.6" stroke="#8a8a8a" stroke-width="1"/>
<line x1="365.1" x2="365.1" y1="299.6" y2="303.6" stroke="#8a8a8a" stroke-width="1"/>
<line x1="440.4" x2="440.4" y1="299.6" y2="303.6" stroke="#8a8a8a" stroke-width="1"/>
<text x="63.8" y="315.6" font-size="12" fill="#cfcfcf" text-anchor="middle" font-weight="normal">10:20 AM</text>
<text x="139.1" y="315.6" font-size="12" fill="#cfcfcf" text-anchor="middle" font-weight="normal">10:30 AM</text>
<text x="214.4" y="315.6" font-size="12" fill="#cfcfcf" text-anchor="middle" font-weight="normal">10:40 AM</text>
<text x="289.8" y="315.6" font-size="12" fill="#cfcfcf" text-anchor="middle" font-weight="normal">10:50 AM</text>
<text x="365.1" y="315.6" font-size="12" fill="#cfcfcf" text-anchor="middle" font-weight="normal">11:00 AM</text>
<text x="440.4" y="315.6" font-size="12" fill="#cfcfcf" text-anchor="middle" font-weight="normal">11:10 AM</text>
<rect x="19.4" y="349" width="10.5" height="10.5" fill="#5ae37a"/>
<text x="38.8" y="358.2" font-size="11" fill="#e9e9e9" text-anchor="start" font-weight="normal" letter-spacing="-0.174" stroke="#e9e9e9" stroke-width=".45">Peak Sessions</text>
</svg></div></section>
<section class="panel" style="left:5px;top:526.5px;width:513.0px;height:378.8px"><div class="pin" style="left:0.0px;top:-0.8px">
<header class="ph" style="left:0.0px;top:0.8px;width:513.0px"></header>
<div class="phc"><svg class="grip" width="12" height="15" viewBox="0 0 12 15"><g fill="#686868"><rect x="1" y="1" width="2" height="2"/><rect x="1" y="5" width="2" height="2"/><rect x="1" y="9" width="2" height="2"/><rect x="1" y="13" width="2" height="2"/><rect x="5" y="1" width="2" height="2"/><rect x="5" y="5" width="2" height="2"/><rect x="5" y="9" width="2" height="2"/><rect x="5" y="13" width="2" height="2"/><rect x="9" y="1" width="2" height="2"/><rect x="9" y="5" width="2" height="2"/><rect x="9" y="9" width="2" height="2"/><rect x="9" y="13" width="2" height="2"/></g></svg><span class="pt" style="letter-spacing:0.039px">Client Connect Time</span><svg class="hi" width="92" height="21" viewBox="0 0 92 21">
<g fill="none" stroke="#a9a9a9" stroke-width="1.4">
<rect x="2.3" y="7" width="4.7" height="7.4" rx=".8"/><rect x="9.7" y="7" width="4.7" height="7.4" rx=".8"/>
<line x1="5" y1="10.7" x2="12" y2="10.7" stroke-width="1.6"/>
</g>
<g fill="#a9a9a9">
<rect x="23.2" y="4" width="2" height="2"/><rect x="26.7" y="4" width="2" height="2"/><rect x="30.2" y="4" width="2" height="2"/>
<rect x="23.2" y="7.5" width="2" height="2"/><rect x="26.7" y="7.5" width="2" height="2"/>
<rect x="23.2" y="11" width="2" height="2"/>
<path d="M32 8.3 A4.5 4.5 0 1 1 27.6 13 L32 12.8 Z"/>
<path d="M33.1 7.2 A4.5 4.5 0 0 1 36.9 11.3 L33.1 11.5 Z" opacity=".8"/>
</g>
<line x1="23.2" y1="17" x2="35.7" y2="3.6" stroke="#a9a9a9" stroke-width="1.2"/>
<g fill="none" stroke="#a9a9a9" stroke-width="1.4">
<path d="M44.8 3.2 V16.6 H60"/>
<path d="M47 12.2 L50.5 8.3 L53.5 11.5 L58.4 6.4" stroke-width="1.9"/>
</g>
<path d="M55.4 4.8 H60.2 V9.6 Z" fill="#a9a9a9"/>
<g fill="#a9a9a9" stroke="#a9a9a9" stroke-width="1.5">
<path d="M69 5 H72.6 L69 8.6 Z M81.8 5 H78.2 L81.8 8.6 Z M69 17 H72.6 L69 13.4 Z M81.8 17 H78.2 L81.8 13.4 Z" stroke="none"/>
<path d="M70.5 6.5 L73.9 9.9 M80.3 6.5 L76.9 9.9 M70.5 15.5 L73.9 12.1 M80.3 15.5 L76.9 12.1" fill="none"/>
</g>
</svg></div>
<svg class="ch" width="512" height="379" viewBox="0 0 512 379">
<text x="255.8" y="48.6" font-size="15.5" fill="#c8c8c8" text-anchor="middle" font-weight="normal" letter-spacing="0.110">Allen Critical Apps</text>
<line x1="75.2" x2="499.7" y1="223.2" y2="223.2" stroke="#3d3d3d" stroke-width="1"/>
<line x1="75.2" x2="499.7" y1="146.9" y2="146.9" stroke="#3d3d3d" stroke-width="1"/>
<line x1="75.2" x2="499.7" y1="70.5" y2="70.5" stroke="#3d3d3d" stroke-width="1"/>
<line x1="166.0" x2="166.0" y1="72.5" y2="299.6" stroke="#3d3d3d" stroke-width="1"/>
<line x1="270.6" x2="270.6" y1="72.5" y2="299.6" stroke="#3d3d3d" stroke-width="1"/>
<line x1="375.1" x2="375.1" y1="72.5" y2="299.6" stroke="#3d3d3d" stroke-width="1"/>
<line x1="479.7" x2="479.7" y1="72.5" y2="299.6" stroke="#3d3d3d" stroke-width="1"/>
<text x="58.5" y="304.9" font-size="12" fill="#cfcfcf" text-anchor="end" font-weight="normal">0</text>
<text x="58.5" y="228.5" font-size="12" fill="#cfcfcf" text-anchor="end" font-weight="normal">50</text>
<text x="58.5" y="152.2" font-size="12" fill="#cfcfcf" text-anchor="end" font-weight="normal">100</text>
<text x="58.5" y="75.8" font-size="12" fill="#cfcfcf" text-anchor="end" font-weight="normal">150</text>
<text transform="translate(27.1 185.1) rotate(-90)" font-size="13" fill="#cfcfcf" text-anchor="middle">ms</text>
<rect x="82.7" y="141.8" width="27.2" height="157.8" fill="#5ae37a"/>
<rect x="117.6" y="152.5" width="27.2" height="147.1" fill="#5ae37a"/>
<rect x="152.4" y="140.8" width="27.2" height="158.8" fill="#5ae37a"/>
<rect x="187.3" y="135.1" width="27.2" height="164.5" fill="#5ae37a"/>
<rect x="222.1" y="144.1" width="27.2" height="155.5" fill="#5ae37a"/>
<rect x="256.9" y="138.5" width="27.2" height="161.1" fill="#5ae37a"/>
<rect x="291.8" y="136.5" width="27.2" height="163.1" fill="#5ae37a"/>
<rect x="326.6" y="130.8" width="27.2" height="168.8" fill="#5ae37a"/>
<rect x="361.5" y="137.4" width="27.2" height="162.2" fill="#5ae37a"/>
<rect x="396.4" y="139.7" width="27.2" height="159.9" fill="#5ae37a"/>
<rect x="431.2" y="137.4" width="27.2" height="162.2" fill="#5ae37a"/>
<rect x="466.1" y="141.8" width="27.2" height="157.8" fill="#5ae37a"/>
<line x1="75.2" x2="499.7" y1="299.6" y2="299.6" stroke="#8a8a8a" stroke-width="1.3"/>
<text x="166.0" y="315.6" font-size="12" fill="#cfcfcf" text-anchor="middle" font-weight="normal">10:30 AM</text>
<text x="270.6" y="315.6" font-size="12" fill="#cfcfcf" text-anchor="middle" font-weight="normal">10:45 AM</text>
<text x="375.1" y="315.6" font-size="12" fill="#cfcfcf" text-anchor="middle" font-weight="normal">11:00 AM</text>
<text x="500.0" y="315.6" font-size="12" fill="#cfcfcf" text-anchor="end" font-weight="normal">11:15 AM</text>
<rect x="19.0" y="349" width="10.5" height="10.5" fill="#5ae37a"/>
<text x="38.4" y="358.2" font-size="11" fill="#e9e9e9" text-anchor="start" font-weight="normal" letter-spacing="0.082" stroke="#e9e9e9" stroke-width=".45">Client Connect Time</text>
</svg></div></section>
<section class="panel" style="left:523px;top:526.5px;width:513.0px;height:378.8px"><div class="pin" style="left:0.0px;top:-0.8px">
<header class="ph" style="left:0.0px;top:0.8px;width:513.0px"></header>
<div class="phc"><svg class="grip" width="12" height="15" viewBox="0 0 12 15"><g fill="#686868"><rect x="1" y="1" width="2" height="2"/><rect x="1" y="5" width="2" height="2"/><rect x="1" y="9" width="2" height="2"/><rect x="1" y="13" width="2" height="2"/><rect x="5" y="1" width="2" height="2"/><rect x="5" y="5" width="2" height="2"/><rect x="5" y="9" width="2" height="2"/><rect x="5" y="13" width="2" height="2"/><rect x="9" y="1" width="2" height="2"/><rect x="9" y="5" width="2" height="2"/><rect x="9" y="9" width="2" height="2"/><rect x="9" y="13" width="2" height="2"/></g></svg><span class="pt" style="letter-spacing:-0.025px">Server Connect Time</span><svg class="hi" width="92" height="21" viewBox="0 0 92 21">
<g fill="none" stroke="#a9a9a9" stroke-width="1.4">
<rect x="2.3" y="7" width="4.7" height="7.4" rx=".8"/><rect x="9.7" y="7" width="4.7" height="7.4" rx=".8"/>
<line x1="5" y1="10.7" x2="12" y2="10.7" stroke-width="1.6"/>
</g>
<g fill="#a9a9a9">
<rect x="23.2" y="4" width="2" height="2"/><rect x="26.7" y="4" width="2" height="2"/><rect x="30.2" y="4" width="2" height="2"/>
<rect x="23.2" y="7.5" width="2" height="2"/><rect x="26.7" y="7.5" width="2" height="2"/>
<rect x="23.2" y="11" width="2" height="2"/>
<path d="M32 8.3 A4.5 4.5 0 1 1 27.6 13 L32 12.8 Z"/>
<path d="M33.1 7.2 A4.5 4.5 0 0 1 36.9 11.3 L33.1 11.5 Z" opacity=".8"/>
</g>
<line x1="23.2" y1="17" x2="35.7" y2="3.6" stroke="#a9a9a9" stroke-width="1.2"/>
<g fill="none" stroke="#a9a9a9" stroke-width="1.4">
<path d="M44.8 3.2 V16.6 H60"/>
<path d="M47 12.2 L50.5 8.3 L53.5 11.5 L58.4 6.4" stroke-width="1.9"/>
</g>
<path d="M55.4 4.8 H60.2 V9.6 Z" fill="#a9a9a9"/>
<g fill="#a9a9a9" stroke="#a9a9a9" stroke-width="1.5">
<path d="M69 5 H72.6 L69 8.6 Z M81.8 5 H78.2 L81.8 8.6 Z M69 17 H72.6 L69 13.4 Z M81.8 17 H78.2 L81.8 13.4 Z" stroke="none"/>
<path d="M70.5 6.5 L73.9 9.9 M80.3 6.5 L76.9 9.9 M70.5 15.5 L73.9 12.1 M80.3 15.5 L76.9 12.1" fill="none"/>
</g>
</svg></div>
<svg class="ch" width="512" height="379" viewBox="0 0 512 379">
<text x="255.8" y="48.6" font-size="15.5" fill="#c8c8c8" text-anchor="middle" font-weight="normal" letter-spacing="0.110">Allen Critical Apps</text>
<line x1="78.6" x2="500.3" y1="223.2" y2="223.2" stroke="#3d3d3d" stroke-width="1"/>
<line x1="78.6" x2="500.3" y1="146.9" y2="146.9" stroke="#3d3d3d" stroke-width="1"/>
<line x1="78.6" x2="500.3" y1="70.5" y2="70.5" stroke="#3d3d3d" stroke-width="1"/>
<line x1="169.4" x2="169.4" y1="72.5" y2="299.6" stroke="#3d3d3d" stroke-width="1"/>
<line x1="273.0" x2="273.0" y1="72.5" y2="299.6" stroke="#3d3d3d" stroke-width="1"/>
<line x1="376.7" x2="376.7" y1="72.5" y2="299.6" stroke="#3d3d3d" stroke-width="1"/>
<line x1="480.3" x2="480.3" y1="72.5" y2="299.6" stroke="#3d3d3d" stroke-width="1"/>
<text x="63.5" y="304.9" font-size="12" fill="#cfcfcf" text-anchor="end" font-weight="normal">0</text>
<text x="63.5" y="228.5" font-size="12" fill="#cfcfcf" text-anchor="end" font-weight="normal">0.05</text>
<text x="63.5" y="152.2" font-size="12" fill="#cfcfcf" text-anchor="end" font-weight="normal">0.1</text>
<text x="63.5" y="75.8" font-size="12" fill="#cfcfcf" text-anchor="end" font-weight="normal">0.15</text>
<text transform="translate(27.7 185.1) rotate(-90)" font-size="13" fill="#cfcfcf" text-anchor="middle">ms</text>
<rect x="86.7" y="163.5" width="27.2" height="136.1" fill="#5ae37a"/>
<rect x="121.2" y="163.5" width="27.2" height="136.1" fill="#5ae37a"/>
<rect x="155.8" y="163.5" width="27.2" height="136.1" fill="#5ae37a"/>
<rect x="190.3" y="148.1" width="27.2" height="151.5" fill="#5ae37a"/>
<rect x="224.9" y="148.1" width="27.2" height="151.5" fill="#5ae37a"/>
<rect x="259.4" y="163.5" width="27.2" height="136.1" fill="#5ae37a"/>
<rect x="294.0" y="163.5" width="27.2" height="136.1" fill="#5ae37a"/>
<rect x="328.5" y="117.4" width="27.2" height="182.2" fill="#5ae37a"/>
<rect x="363.1" y="87.3" width="27.2" height="212.3" fill="#5ae37a"/>
<rect x="397.6" y="148.1" width="27.2" height="151.5" fill="#5ae37a"/>
<rect x="432.2" y="148.1" width="27.2" height="151.5" fill="#5ae37a"/>
<rect x="466.7" y="117.4" width="27.2" height="182.2" fill="#5ae37a"/>
<line x1="78.6" x2="500.3" y1="299.6" y2="299.6" stroke="#8a8a8a" stroke-width="1.3"/>
<text x="169.4" y="315.6" font-size="12" fill="#cfcfcf" text-anchor="middle" font-weight="normal">10:30 AM</text>
<text x="273.0" y="315.6" font-size="12" fill="#cfcfcf" text-anchor="middle" font-weight="normal">10:45 AM</text>
<text x="376.7" y="315.6" font-size="12" fill="#cfcfcf" text-anchor="middle" font-weight="normal">11:00 AM</text>
<text x="501.0" y="315.6" font-size="12" fill="#cfcfcf" text-anchor="end" font-weight="normal">11:15 AM</text>
<rect x="20.0" y="349" width="10.5" height="10.5" fill="#5ae37a"/>
<text x="39.0" y="358.2" font-size="11" fill="#e9e9e9" text-anchor="start" font-weight="normal" letter-spacing="0.052" stroke="#e9e9e9" stroke-width=".45">Server Connect Time</text>
</svg></div></section>
<section class="panel" style="left:1040px;top:526.5px;width:513.0px;height:378.8px"><div class="pin" style="left:1.0px;top:-0.8px">
<header class="ph" style="left:-1.0px;top:0.8px;width:513.0px"></header>
<div class="phc"><svg class="grip" width="12" height="15" viewBox="0 0 12 15"><g fill="#686868"><rect x="1" y="1" width="2" height="2"/><rect x="1" y="5" width="2" height="2"/><rect x="1" y="9" width="2" height="2"/><rect x="1" y="13" width="2" height="2"/><rect x="5" y="1" width="2" height="2"/><rect x="5" y="5" width="2" height="2"/><rect x="5" y="9" width="2" height="2"/><rect x="5" y="13" width="2" height="2"/><rect x="9" y="1" width="2" height="2"/><rect x="9" y="5" width="2" height="2"/><rect x="9" y="9" width="2" height="2"/><rect x="9" y="13" width="2" height="2"/></g></svg><span class="pt" style="letter-spacing:0.003px">Transactions</span><svg class="hi" width="92" height="21" viewBox="0 0 92 21">
<g fill="none" stroke="#a9a9a9" stroke-width="1.4">
<rect x="2.3" y="7" width="4.7" height="7.4" rx=".8"/><rect x="9.7" y="7" width="4.7" height="7.4" rx=".8"/>
<line x1="5" y1="10.7" x2="12" y2="10.7" stroke-width="1.6"/>
</g>
<g fill="#a9a9a9">
<rect x="23.2" y="4" width="2" height="2"/><rect x="26.7" y="4" width="2" height="2"/><rect x="30.2" y="4" width="2" height="2"/>
<rect x="23.2" y="7.5" width="2" height="2"/><rect x="26.7" y="7.5" width="2" height="2"/>
<rect x="23.2" y="11" width="2" height="2"/>
<path d="M32 8.3 A4.5 4.5 0 1 1 27.6 13 L32 12.8 Z"/>
<path d="M33.1 7.2 A4.5 4.5 0 0 1 36.9 11.3 L33.1 11.5 Z" opacity=".8"/>
</g>
<line x1="23.2" y1="17" x2="35.7" y2="3.6" stroke="#a9a9a9" stroke-width="1.2"/>
<g fill="none" stroke="#a9a9a9" stroke-width="1.4">
<path d="M44.8 3.2 V16.6 H60"/>
<path d="M47 12.2 L50.5 8.3 L53.5 11.5 L58.4 6.4" stroke-width="1.9"/>
</g>
<path d="M55.4 4.8 H60.2 V9.6 Z" fill="#a9a9a9"/>
<g fill="#a9a9a9" stroke="#a9a9a9" stroke-width="1.5">
<path d="M69 5 H72.6 L69 8.6 Z M81.8 5 H78.2 L81.8 8.6 Z M69 17 H72.6 L69 13.4 Z M81.8 17 H78.2 L81.8 13.4 Z" stroke="none"/>
<path d="M70.5 6.5 L73.9 9.9 M80.3 6.5 L76.9 9.9 M70.5 15.5 L73.9 12.1 M80.3 15.5 L76.9 12.1" fill="none"/>
</g>
</svg></div>
<svg class="ch" width="512" height="379" viewBox="0 0 512 379">
<text x="255.8" y="48.6" font-size="15.5" fill="#c8c8c8" text-anchor="middle" font-weight="normal" letter-spacing="0.110">Allen Critical Apps</text>
<line x1="55.2" x2="503.0" y1="223.2" y2="223.2" stroke="#3d3d3d" stroke-width="1"/>
<line x1="55.2" x2="503.0" y1="146.9" y2="146.9" stroke="#3d3d3d" stroke-width="1"/>
<line x1="55.2" x2="503.0" y1="70.5" y2="70.5" stroke="#3d3d3d" stroke-width="1"/>
<line x1="75.5" x2="75.5" y1="72.5" y2="299.6" stroke="#3d3d3d" stroke-width="1"/>
<line x1="148.7" x2="148.7" y1="72.5" y2="299.6" stroke="#3d3d3d" stroke-width="1"/>
<line x1="221.9" x2="221.9" y1="72.5" y2="299.6" stroke="#3d3d3d" stroke-width="1"/>
<line x1="295.1" x2="295.1" y1="72.5" y2="299.6" stroke="#3d3d3d" stroke-width="1"/>
<line x1="368.3" x2="368.3" y1="72.5" y2="299.6" stroke="#3d3d3d" stroke-width="1"/>
<line x1="441.5" x2="441.5" y1="72.5" y2="299.6" stroke="#3d3d3d" stroke-width="1"/>
<text x="36.8" y="304.9" font-size="12" fill="#cfcfcf" text-anchor="end" font-weight="normal">0</text>
<text x="36.8" y="228.5" font-size="12" fill="#cfcfcf" text-anchor="end" font-weight="normal">500</text>
<text x="36.8" y="152.2" font-size="12" fill="#cfcfcf" text-anchor="end" font-weight="normal">1000</text>
<text x="36.8" y="75.8" font-size="12" fill="#cfcfcf" text-anchor="end" font-weight="normal">1500</text>
<rect x="60.7" y="204.4" width="29.6" height="95.2" fill="#5ae37a"/>
<rect x="97.3" y="283.6" width="29.6" height="16.0" fill="#5ae37a"/>
<rect x="133.9" y="263.9" width="29.6" height="35.7" fill="#5ae37a"/>
<rect x="170.5" y="270.6" width="29.6" height="29.0" fill="#5ae37a"/>
<rect x="207.1" y="298.7" width="29.6" height="0.9" fill="#5ae37a"/>
<rect x="243.7" y="182.6" width="29.6" height="117.0" fill="#5ae37a"/>
<rect x="280.3" y="180.3" width="29.6" height="119.3" fill="#5ae37a"/>
<rect x="316.9" y="265.2" width="29.6" height="34.4" fill="#5ae37a"/>
<rect x="353.5" y="260.2" width="29.6" height="39.4" fill="#5ae37a"/>
<rect x="390.1" y="123.0" width="29.6" height="176.6" fill="#5ae37a"/>
<rect x="426.7" y="261.9" width="29.6" height="37.7" fill="#5ae37a"/>
<rect x="463.3" y="293.3" width="29.6" height="6.3" fill="#5ae37a"/>
<line x1="55.2" x2="503.0" y1="299.6" y2="299.6" stroke="#8a8a8a" stroke-width="1.3"/>
<line x1="75.5" x2="75.5" y1="299.6" y2="303.6" stroke="#8a8a8a" stroke-width="1"/>
<line x1="148.7" x2="148.7" y1="299.6" y2="303.6" stroke="#8a8a8a" stroke-width="1"/>
<line x1="221.9" x2="221.9" y1="299.6" y2="303.6" stroke="#8a8a8a" stroke-width="1"/>
<line x1="295.1" x2="295.1" y1="299.6" y2="303.6" stroke="#8a8a8a" stroke-width="1"/>
<line x1="368.3" x2="368.3" y1="299.6" y2="303.6" stroke="#8a8a8a" stroke-width="1"/>
<line x1="441.5" x2="441.5" y1="299.6" y2="303.6" stroke="#8a8a8a" stroke-width="1"/>
<text x="75.5" y="315.6" font-size="12" fill="#cfcfcf" text-anchor="middle" font-weight="normal">10:20 AM</text>
<text x="148.7" y="315.6" font-size="12" fill="#cfcfcf" text-anchor="middle" font-weight="normal">10:30 AM</text>
<text x="221.9" y="315.6" font-size="12" fill="#cfcfcf" text-anchor="middle" font-weight="normal">10:40 AM</text>
<text x="295.1" y="315.6" font-size="12" fill="#cfcfcf" text-anchor="middle" font-weight="normal">10:50 AM</text>
<text x="368.3" y="315.6" font-size="12" fill="#cfcfcf" text-anchor="middle" font-weight="normal">11:00 AM</text>
<text x="441.5" y="315.6" font-size="12" fill="#cfcfcf" text-anchor="middle" font-weight="normal">11:10 AM</text>
<rect x="18.7" y="349" width="10.5" height="10.5" fill="#5ae37a"/>
<text x="38.4" y="358.2" font-size="11" fill="#e9e9e9" text-anchor="start" font-weight="normal" letter-spacing="0.053" stroke="#e9e9e9" stroke-width=".45">Transactions</text>
</svg></div></section>
<section class="panel" style="left:1558.7px;top:526.5px;width:513.3px;height:378.8px"><div class="pin" style="left:0.3px;top:-0.8px">
<header class="ph" style="left:-0.3px;top:0.8px;width:513.3px"></header>
<div class="phc"><svg class="grip" width="12" height="15" viewBox="0 0 12 15"><g fill="#686868"><rect x="1" y="1" width="2" height="2"/><rect x="1" y="5" width="2" height="2"/><rect x="1" y="9" width="2" height="2"/><rect x="1" y="13" width="2" height="2"/><rect x="5" y="1" width="2" height="2"/><rect x="5" y="5" width="2" height="2"/><rect x="5" y="9" width="2" height="2"/><rect x="5" y="13" width="2" height="2"/><rect x="9" y="1" width="2" height="2"/><rect x="9" y="5" width="2" height="2"/><rect x="9" y="9" width="2" height="2"/><rect x="9" y="13" width="2" height="2"/></g></svg><span class="pt" style="letter-spacing:-0.076px">Avg Application RT</span><svg class="hi" width="92" height="21" viewBox="0 0 92 21">
<g fill="none" stroke="#a9a9a9" stroke-width="1.4">
<rect x="2.3" y="7" width="4.7" height="7.4" rx=".8"/><rect x="9.7" y="7" width="4.7" height="7.4" rx=".8"/>
<line x1="5" y1="10.7" x2="12" y2="10.7" stroke-width="1.6"/>
</g>
<g fill="#a9a9a9">
<rect x="23.2" y="4" width="2" height="2"/><rect x="26.7" y="4" width="2" height="2"/><rect x="30.2" y="4" width="2" height="2"/>
<rect x="23.2" y="7.5" width="2" height="2"/><rect x="26.7" y="7.5" width="2" height="2"/>
<rect x="23.2" y="11" width="2" height="2"/>
<path d="M32 8.3 A4.5 4.5 0 1 1 27.6 13 L32 12.8 Z"/>
<path d="M33.1 7.2 A4.5 4.5 0 0 1 36.9 11.3 L33.1 11.5 Z" opacity=".8"/>
</g>
<line x1="23.2" y1="17" x2="35.7" y2="3.6" stroke="#a9a9a9" stroke-width="1.2"/>
<g fill="none" stroke="#a9a9a9" stroke-width="1.4">
<path d="M44.8 3.2 V16.6 H60"/>
<path d="M47 12.2 L50.5 8.3 L53.5 11.5 L58.4 6.4" stroke-width="1.9"/>
</g>
<path d="M55.4 4.8 H60.2 V9.6 Z" fill="#a9a9a9"/>
<g fill="#a9a9a9" stroke="#a9a9a9" stroke-width="1.5">
<path d="M69 5 H72.6 L69 8.6 Z M81.8 5 H78.2 L81.8 8.6 Z M69 17 H72.6 L69 13.4 Z M81.8 17 H78.2 L81.8 13.4 Z" stroke="none"/>
<path d="M70.5 6.5 L73.9 9.9 M80.3 6.5 L76.9 9.9 M70.5 15.5 L73.9 12.1 M80.3 15.5 L76.9 12.1" fill="none"/>
</g>
</svg></div>
<svg class="ch" width="512" height="379" viewBox="0 0 512 379">
<text x="255.8" y="48.6" font-size="15.5" fill="#c8c8c8" text-anchor="middle" font-weight="normal" letter-spacing="0.110">Allen Critical Apps</text>
<line x1="68.9" x2="500.0" y1="223.2" y2="223.2" stroke="#3d3d3d" stroke-width="1"/>
<line x1="68.9" x2="500.0" y1="146.9" y2="146.9" stroke="#3d3d3d" stroke-width="1"/>
<line x1="68.9" x2="500.0" y1="70.5" y2="70.5" stroke="#3d3d3d" stroke-width="1"/>
<line x1="161.5" x2="161.5" y1="72.5" y2="299.6" stroke="#3d3d3d" stroke-width="1"/>
<line x1="267.6" x2="267.6" y1="72.5" y2="299.6" stroke="#3d3d3d" stroke-width="1"/>
<line x1="373.7" x2="373.7" y1="72.5" y2="299.6" stroke="#3d3d3d" stroke-width="1"/>
<line x1="479.8" x2="479.8" y1="72.5" y2="299.6" stroke="#3d3d3d" stroke-width="1"/>
<text x="53.8" y="304.9" font-size="12" fill="#cfcfcf" text-anchor="end" font-weight="normal">0</text>
<text x="53.8" y="228.5" font-size="12" fill="#cfcfcf" text-anchor="end" font-weight="normal">5</text>
<text x="53.8" y="152.2" font-size="12" fill="#cfcfcf" text-anchor="end" font-weight="normal">10</text>
<text x="53.8" y="75.8" font-size="12" fill="#cfcfcf" text-anchor="end" font-weight="normal">15</text>
<text transform="translate(28.4 185.1) rotate(-90)" font-size="13" fill="#cfcfcf" text-anchor="middle">ms</text>
<rect x="76.5" y="257.8" width="28.6" height="41.8" fill="#5ae37a"/>
<rect x="111.9" y="284.6" width="28.6" height="15.0" fill="#5ae37a"/>
<rect x="147.2" y="252.9" width="28.6" height="46.7" fill="#5ae37a"/>
<rect x="182.6" y="282.2" width="28.6" height="17.4" fill="#5ae37a"/>
<rect x="217.9" y="128.5" width="28.6" height="171.1" fill="#5ae37a"/>
<rect x="253.3" y="235.5" width="28.6" height="64.1" fill="#5ae37a"/>
<rect x="288.7" y="236.8" width="28.6" height="62.8" fill="#5ae37a"/>
<rect x="324.0" y="277.9" width="28.6" height="21.7" fill="#5ae37a"/>
<rect x="359.4" y="280.2" width="28.6" height="19.4" fill="#5ae37a"/>
<rect x="394.7" y="238.8" width="28.6" height="60.8" fill="#5ae37a"/>
<rect x="430.1" y="234.4" width="28.6" height="65.2" fill="#5ae37a"/>
<rect x="465.5" y="258.5" width="28.6" height="41.1" fill="#5ae37a"/>
<line x1="68.9" x2="500.0" y1="299.6" y2="299.6" stroke="#8a8a8a" stroke-width="1.3"/>
<text x="161.5" y="315.6" font-size="12" fill="#cfcfcf" text-anchor="middle" font-weight="normal">10:30 AM</text>
<text x="267.6" y="315.6" font-size="12" fill="#cfcfcf" text-anchor="middle" font-weight="normal">10:45 AM</text>
<text x="373.7" y="315.6" font-size="12" fill="#cfcfcf" text-anchor="middle" font-weight="normal">11:00 AM</text>
<text x="501.0" y="315.6" font-size="12" fill="#cfcfcf" text-anchor="end" font-weight="normal">11:15 AM</text>
<rect x="19.4" y="349" width="10.5" height="10.5" fill="#5ae37a"/>
<text x="38.8" y="358.2" font-size="11" fill="#e9e9e9" text-anchor="start" font-weight="normal" letter-spacing="0.020" stroke="#e9e9e9" stroke-width=".45">Avg Application RT</text>
</svg></div></section>
</main>
<footer id="bbar">
<div class="act" style="left:977px;width:143px"></div>
<svg style="left:14px;top:16px" width="11" height="10" viewBox="0 0 11 10"><path d="M1.5 0 V9 M5.5 0 V9 M9.5 0 V9" stroke="#e8e8e8" stroke-width="1.5"/></svg>
<span class="bt" style="left:32.5px;letter-spacing:.21px">Westford</span>
<svg style="left:145px;top:17px" width="12" height="12" viewBox="0 0 12 12"><path d="M1.8 1.8 L10.2 10.2 M10.2 1.8 L1.8 10.2" stroke="#f4f4f4" stroke-width="2.5"/></svg>
<div class="bs" style="left:174px"></div>
<svg style="left:195px;top:16px" width="11" height="10" viewBox="0 0 11 10"><path d="M1.5 0 V9 M5.5 0 V9 M9.5 0 V9" stroke="#e8e8e8" stroke-width="1.5"/></svg>
<span class="bt" style="left:213.5px;letter-spacing:-.2px">Allen</span>
<svg style="left:292px;top:17px" width="12" height="12" viewBox="0 0 12 12"><path d="M1.8 1.8 L10.2 10.2 M10.2 1.8 L1.8 10.2" stroke="#f4f4f4" stroke-width="2.5"/></svg>
<div class="bs" style="left:322px"></div>
<svg style="left:342px;top:16px" width="11" height="10" viewBox="0 0 11 10"><path d="M1.5 0 V9 M5.5 0 V9 M9.5 0 V9" stroke="#e8e8e8" stroke-width="1.5"/></svg>
<span class="bt" style="left:361px;letter-spacing:-.98px">COVID19 VPN WATCH</span>
<svg style="left:571px;top:17px" width="12" height="12" viewBox="0 0 12 12"><path d="M1.8 1.8 L10.2 10.2 M10.2 1.8 L1.8 10.2" stroke="#f4f4f4" stroke-width="2.5"/></svg>
<div class="bs" style="left:601px"></div>
<svg style="left:622px;top:16px" width="11" height="10" viewBox="0 0 11 10"><path d="M1.5 0 V9 M5.5 0 V9 M9.5 0 V9" stroke="#e8e8e8" stroke-width="1.5"/></svg>
<span class="bt" style="left:640.5px;letter-spacing:-.73px">nGP-VoIP</span>
<svg style="left:754px;top:17px" width="12" height="12" viewBox="0 0 12 12"><path d="M1.8 1.8 L10.2 10.2 M10.2 1.8 L1.8 10.2" stroke="#f4f4f4" stroke-width="2.5"/></svg>
<div class="bs" style="left:784px"></div>
<svg style="left:803px;top:16px" width="11" height="10" viewBox="0 0 11 10"><path d="M1.5 0 V9 M5.5 0 V9 M9.5 0 V9" stroke="#e8e8e8" stroke-width="1.5"/></svg>
<span class="bt" style="left:822.5px;letter-spacing:-.45px">nGP-O365</span>
<svg style="left:944px;top:17px" width="12" height="12" viewBox="0 0 12 12"><path d="M1.8 1.8 L10.2 10.2 M10.2 1.8 L1.8 10.2" stroke="#f4f4f4" stroke-width="2.5"/></svg>
<div class="bs" style="left:975px"></div>
<svg style="left:994px;top:16px" width="11" height="10" viewBox="0 0 11 10"><path d="M1.5 0 V9 M5.5 0 V9 M9.5 0 V9" stroke="#e8e8e8" stroke-width="1.5"/></svg>
<span class="bt" style="left:1012.5px;letter-spacing:-.2px">Allen</span>
<svg style="left:1090px;top:17px" width="12" height="12" viewBox="0 0 12 12"><path d="M1.8 1.8 L10.2 10.2 M10.2 1.8 L1.8 10.2" stroke="#f4f4f4" stroke-width="2.5"/></svg>
</footer>
<div id="rot"></div>
<svg style="position:absolute;left:1936px;top:1143.3px" width="16" height="15" viewBox="0 0 16 15"><path d="M1.5 1.5 H14.5 V9 H1.5 Z" fill="none" stroke="#e8e8e8" stroke-width="1.7"/><path d="M8 9 V11 M8 10.5 L4.5 14 M8 10.5 L11.5 14" stroke="#e8e8e8" stroke-width="1.5" fill="none"/></svg>
<div id="rott">Rotate Tabs</div>

</body></html>
